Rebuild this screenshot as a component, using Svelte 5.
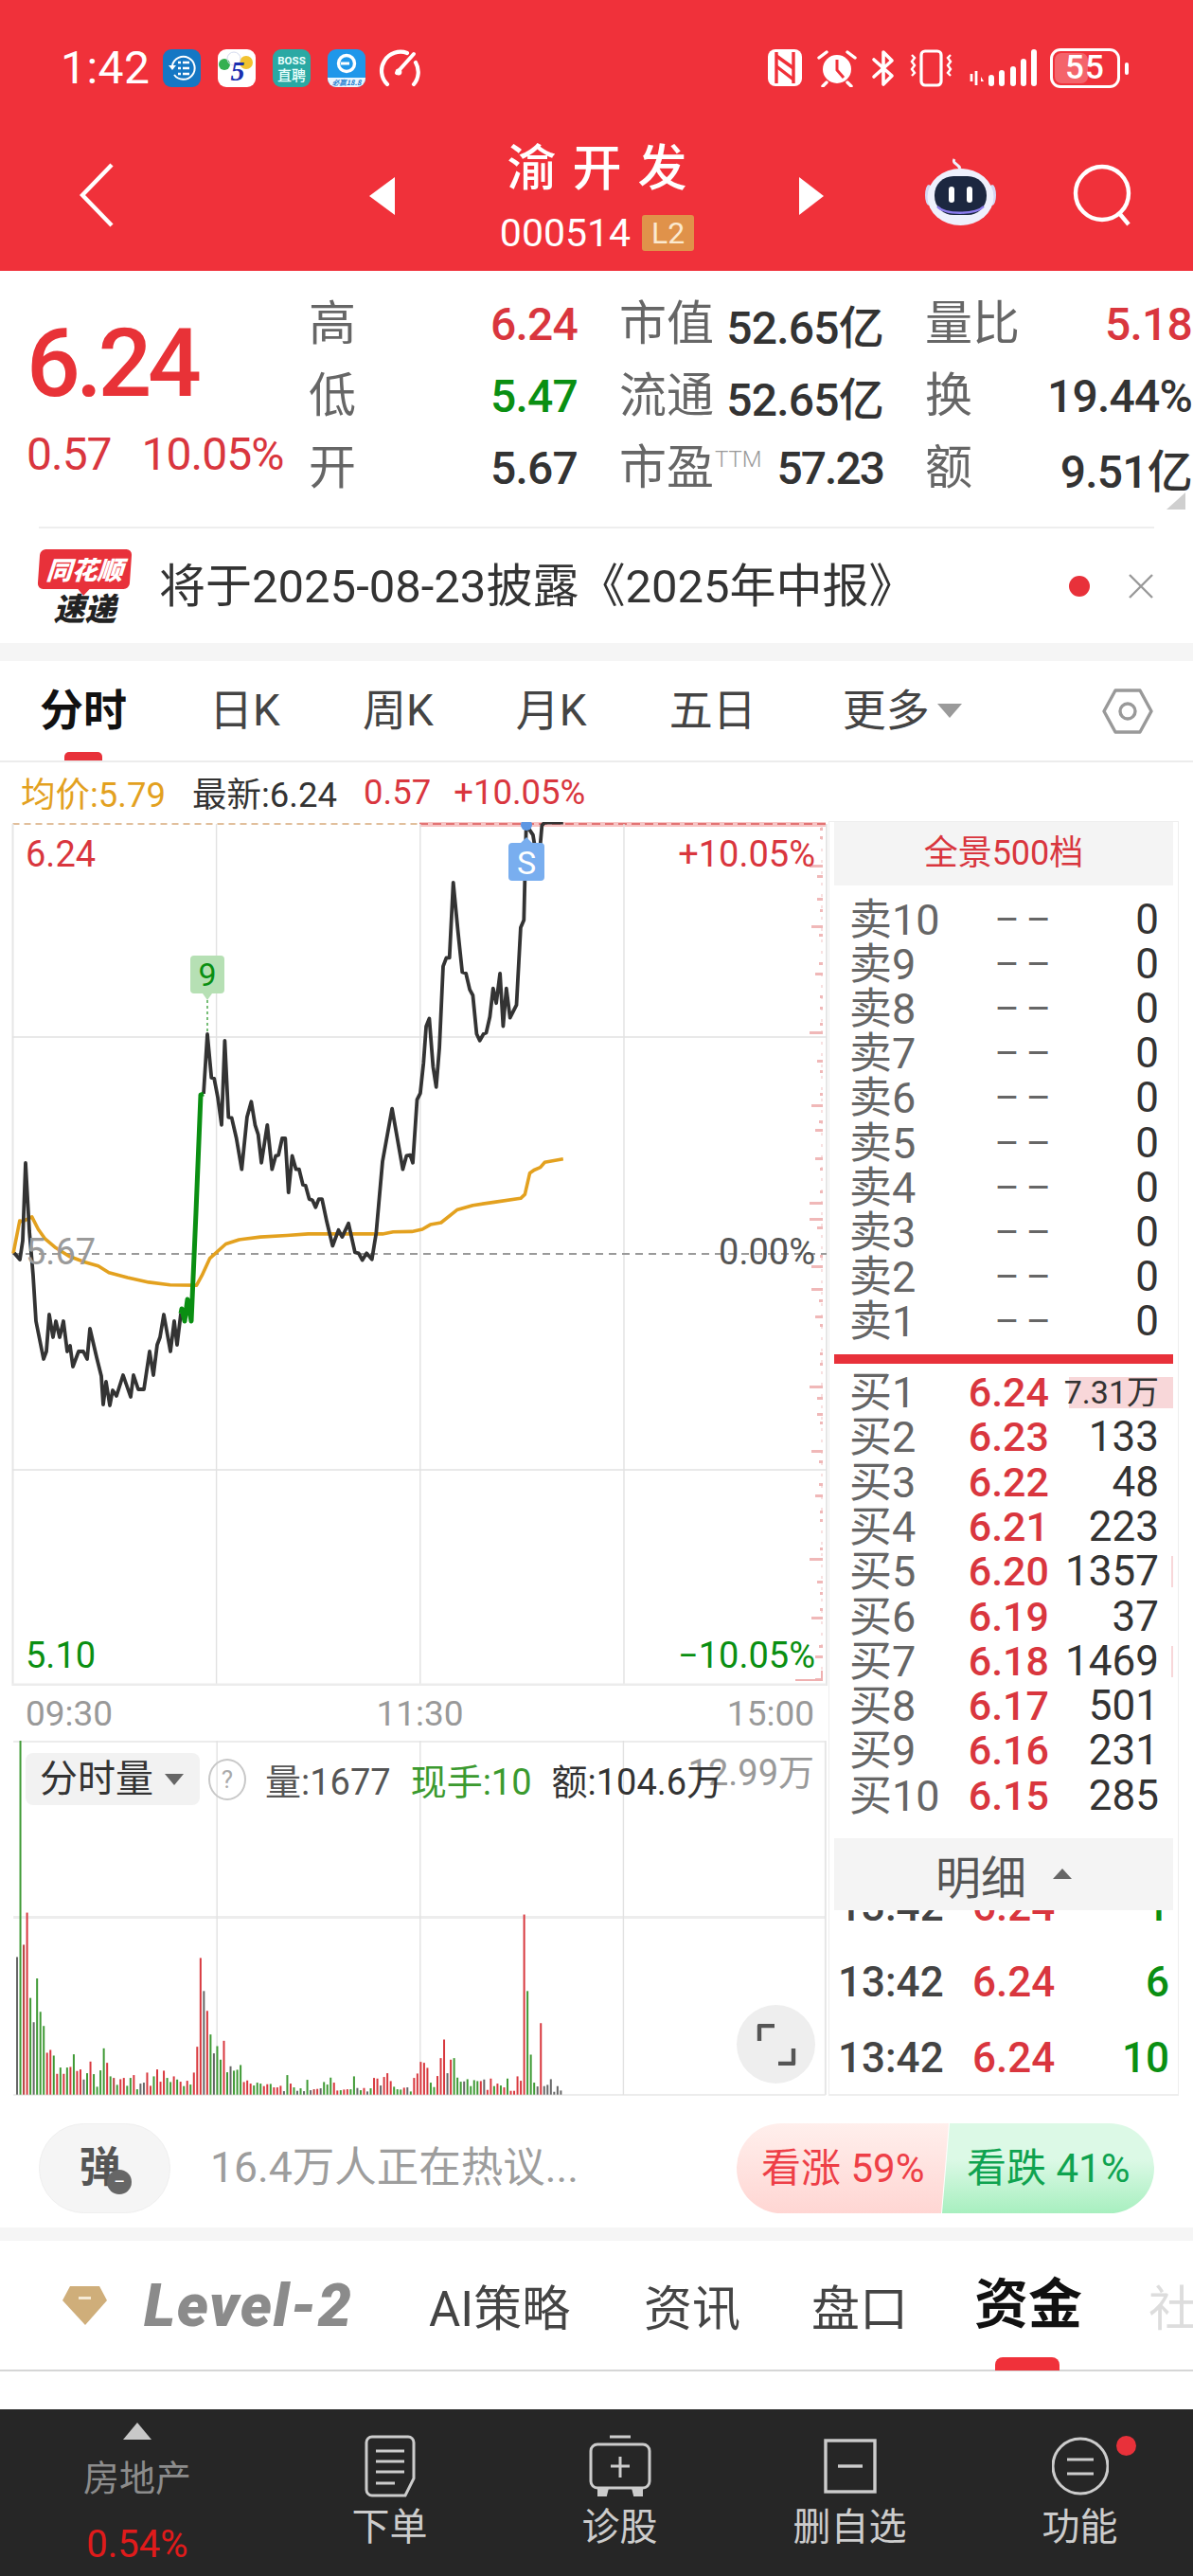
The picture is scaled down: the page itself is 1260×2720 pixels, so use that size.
<script>
  const Z = (p) => p.map(([x, y]) => [+(x / 1.782).toFixed(1), +(800 + y / 2.45).toFixed(1)]);
  const pts = (a) => a.map((p) => p.join(',')).join(' ');

  const low = [[15,1323],[21,1330],[24,1310],[27,1228],[31,1300],[33,1323],[35,1347],[38,1395],[46,1435],[49,1427],[52,1388],[56,1412],[59,1395],[63,1412],[67,1395],[71,1427],[74,1421],[77,1443],[83,1427],[88,1427],[92,1435],[95,1403],[102,1433],[107,1453],[109,1483],[112,1459],[116,1484],[119,1468],[123,1474],[130,1452],[138,1475],[141,1452],[146,1467],[152,1467],[158,1427],[162,1452],[166,1420],[169,1412],[173,1388],[180,1427],[184,1395],[187,1420],[191,1387]];
  const greenLine = [[191,1387],[192,1382],[195,1395],[198,1372],[202,1395],[207,1280],[212,1156],[215,1155]];
  const high = [[215,1155],[219,1092]].concat(Z([[398,828],[403,830],[410,880],[417,950],[423,732],[430,930],[436,932],[445,985],[455,1065],[465,930],[473,890],[480,950],[486,975],[492,1048],[503,950],[512,1065],[519,1030],[524,1028],[531,985],[537,985],[543,1125],[550,1030],[557,1065],[563,1065],[570,1105],[575,1107],[582,1142],[588,1145],[594,1163],[600,1142],[606,1142],[615,1200],[626,1263],[637,1222],[644,1240],[656,1205],[668,1280],[675,1282],[682,1300],[690,1282],[700,1298],[708,1230],[720,1045],[738,908],[758,1065],[765,1030],[772,1028],[777,1048],[785,885],[791,868],[797,790],[802,695],[808,675],[815,800],[821,852],[827,750],[834,540],[840,518],[846,518],[853,323],[862,450],[870,555],[877,558],[884,600],[890,615],[897,715],[903,732],[910,715],[915,712],[922,670],[928,597],[934,635],[941,558],[947,695],[953,597],[960,673],[972,640],[980,440],[986,420],[990,190],[991,175],[1003,200],[1013,285],[1020,175],[1025,168],[1060,168]]));
  const avg = Z([[25,1283],[37,1198],[42,1200],[60,1188],[72,1220],[85,1245],[105,1268],[130,1290],[160,1305],[185,1315],[205,1332],[240,1345],[280,1357],[320,1364],[370,1365],[380,1340],[395,1295],[425,1258],[450,1247],[490,1240],[540,1236],[580,1232],[720,1232],[740,1227],[775,1226],[795,1220],[810,1208],[830,1203],[860,1170],[890,1158],[930,1150],[980,1140],[988,1130],[997,1075],[1005,1067],[1017,1060],[1025,1047],[1040,1043],[1060,1038]]);

  const volRaw = 'k201 g-486 R162 r60 g331 k408 g269 g375 g420 r505 r496 g514 r572 g552 r572 g552 r550 g510 r563 r558 k590 g570 r533 g573 g613 g561 g491 r537 g580 R585 g607 r589 r585 g610 g585 r576 g621 k603 k600 r568 r610 g580 r558 r597 r562 g585 g598 r580 g590 r597 g611 r594 g606 r568 r486 r204 k309 r372 g447 k507 g484 g527 r467 g567 k548 g562 g559 g544 r598 r593 r603 g609 g600 g603 r611 r605 g604 r615 r615 r610 k627 g576 r603 g615 k626 g618 k627 g591 k624 R621 r620 k618 g598 g606 g584 r600 r625 g624 r622 r621 g621 g580 k617 g624 r617 k628 g618 r585 r587 k609 r582 r570 r595 g613 g621 g622 r616 k615 g628 r585 r571 r534 r537 r553 g600 g614 r579 r522 r463 k570 r527 g522 g584 g597 k596 g589 g611 g592 g595 r595 k590 r623 r587 g611 r603 g609 r615 g587 r626 r626 r580 r594 r66 g309 g511 g600 k612 r411 k611 k607 k589 k629 k611 k625';
  const colors = { k: '#666666', g: '#3f9a35', r: '#d8383e', R: '#b8403e' };
  const bars = volRaw.split(' ').map((s, i) => {
    const h = (638 - +s.slice(1)) / 3;
    return { x: +(15.9 + i * 3.533).toFixed(2), h, c: colors[s[0]] };
  });

  let ticks = [];
  for (let i = 0, y = 874; y < 1775; i++) {
    const w = [3, 8, 4, 12, 3, 6, 14, 3][(i * 7 + (i >> 2)) % 8];
    ticks.push({ y, w });
    y += [9, 17, 12, 24, 11, 30][(i * 5) % 6];
  }

  const sells = [10, 9, 8, 7, 6, 5, 4, 3, 2, 1];
  const buys = [
    ['买1', '6.24', '7.31万'], ['买2', '6.23', '133'], ['买3', '6.22', '48'], ['买4', '6.21', '223'],
    ['买5', '6.20', '1357'], ['买6', '6.19', '37'], ['买7', '6.18', '1469'], ['买8', '6.17', '501'],
    ['买9', '6.16', '231'], ['买10', '6.15', '285']
  ];
  const tradeRows = ['1', '6', '10'];
  const chartV = [228.6, 443.8, 659];
</script>

<div class="page">
  <header class="head">
    <div class="status">
      <span class="time">1:42</span>
      <svg class="ni" viewBox="0 0 40 40"><rect width="40" height="40" rx="9" fill="#1577c4"/><path d="M10 17a12 12 0 1 1 2 10" fill="none" stroke="#fff" stroke-width="2"/><path d="M6 17h8l-4 5z" fill="#fff"/><path d="M16 14h3m2 0h7M16 20h3m2 0h7M16 26h3m2 0h7" stroke="#fff" stroke-width="2.4"/></svg>
      <svg class="ni" viewBox="0 0 40 40"><rect width="40" height="40" rx="9" fill="#fff"/><circle cx="30" cy="14" r="7" fill="#f2c230"/><circle cx="7" cy="16" r="6" fill="#35b050"/><circle cx="17" cy="10" r="7" fill="none" stroke="#d6dcef"/><text x="21" y="33" class="five">5</text></svg>
      <svg class="ni" viewBox="0 0 40 40"><rect width="40" height="40" rx="9" fill="#2aa9a4"/><text x="20" y="16" class="boss">BOSS</text><text x="20" y="33" class="zp">直聘</text></svg>
      <svg class="ni" viewBox="0 0 40 40"><rect width="40" height="40" rx="9" fill="#1f97ea"/><path d="M0 30h40v1a9 9 0 0 1-9 9H9a9 9 0 0 1-9-9z" fill="#eaf6ff"/><circle cx="20" cy="15" r="8.5" fill="none" stroke="#fff" stroke-width="3.4"/><path d="M14 15h9" stroke="#fff" stroke-width="3"/><text x="20" y="38" class="bi">必赢18.8</text></svg>
      <svg class="gauge" viewBox="0 0 46 40"><path d="M9 37A20 20 0 0 1 30 4M39 14a20 20 0 0 1-2 23" fill="none" stroke="#fff" stroke-width="4.2" stroke-linecap="round"/><path d="M19 25L37 5" stroke="#fff" stroke-width="4" stroke-linecap="round"/><circle cx="21" cy="24" r="3.4" fill="#fff"/></svg>
      <span class="spacer"></span>
      <svg class="s1" viewBox="0 0 36 39"><rect width="36" height="39" rx="8" fill="#fff"/><path d="M9 3v33M27 3v33" stroke="#f03038" stroke-width="3.4"/><path d="M9 7l18 13M9 18l18 14" stroke="#f03038" stroke-width="3.4"/></svg>
      <svg class="s2" viewBox="0 0 42 40"><circle cx="21" cy="21" r="15" fill="#fff"/><path d="M21 11v11l7 8" fill="none" stroke="#f03038" stroke-width="3"/><path d="M2 9l8-6M40 9l-8-6M10 35l-4 4M32 35l4 4" stroke="#fff" stroke-width="3.4" stroke-linecap="round"/></svg>
      <svg class="s3" viewBox="0 0 25 40"><path d="M3 11l19 17-9 9V3l9 9L3 29" fill="none" stroke="#fff" stroke-width="3.6" stroke-linejoin="round" stroke-linecap="round"/></svg>
      <svg class="s4" viewBox="0 0 47 40"><rect x="13" y="2" width="21" height="36" rx="4" fill="none" stroke="#fff" stroke-width="3.2"/><path d="M3 6l3 3-3 4 3 4-3 4 3 4-3 3M44 6l-3 3 3 4-3 4 3 4-3 4 3 3" fill="none" stroke="#fff" stroke-width="2.4"/></svg>
      <svg class="s5" viewBox="0 0 72 40"><path d="M3 34v-8M8 38V23" stroke="#fff" stroke-width="2.8"/><path d="M13 29l3 5h-3z" fill="#fff"/><g stroke="#fff" stroke-width="6" stroke-linecap="round"><path d="M24 36v-6M35 36v-11M47 36V21M58 36V13"/><path d="M69 36V3"/></g></svg>
      <div class="batt"><div class="battfill"></div><span>55</span></div>
      <div class="nub"></div>
    </div>
    <div class="nav">
      <svg class="back" viewBox="0 0 36 68"><path d="M34 2L3 34l31 32" fill="none" stroke="#fff" stroke-width="4.4"/></svg>
      <div class="tri-l"></div>
      <div class="center">
        <div class="title">渝开发</div>
        <div class="code"><span>000514</span><b>L2</b></div>
      </div>
      <div class="tri-r"></div>
      <svg class="robot" viewBox="0 0 77 72">
        <path d="M38 12C36 6 29 7 32 2" fill="none" stroke="#eef0fb" stroke-width="3"/>
        <ellipse cx="5" cy="40" rx="4" ry="11" fill="#d4d6f2"/><ellipse cx="72" cy="40" rx="4" ry="11" fill="#d4d6f2"/>
        <ellipse cx="38.5" cy="42" rx="35" ry="30" fill="#eef0fc"/>
        <rect x="11" y="20" width="55" height="41" rx="20" fill="#1c2740"/>
        <path d="M14 52c8 9 40 9 49 0" fill="none" stroke="#8d7df0" stroke-width="2.4"/>
        <rect x="26" y="31" width="6" height="17" rx="3" fill="#fff"/><rect x="45" y="31" width="6" height="17" rx="3" fill="#fff"/>
      </svg>
      <svg class="search" viewBox="0 0 66 66"><circle cx="31" cy="31" r="28" fill="none" stroke="#fff" stroke-width="4.4"/><path d="M49 52l10 12" stroke="#fff" stroke-width="4.4"/></svg>
    </div>
  </header>

  <section class="quote">
    <div class="pricebox">
      <div class="big">6.24</div>
      <div class="chg"><span>0.57</span><span>10.05%</span></div>
    </div>
    <div class="stats">
      <div class="cell"><em>高</em><b class="up">6.24</b></div>
      <div class="cell"><em>市值</em><b>52.65亿</b></div>
      <div class="cell"><em>量比</em><b class="up">5.18</b></div>
      <div class="cell"><em>低</em><b class="dn">5.47</b></div>
      <div class="cell"><em>流通</em><b>52.65亿</b></div>
      <div class="cell"><em>换</em><b>19.44%</b></div>
      <div class="cell"><em>开</em><b>5.67</b></div>
      <div class="cell"><em>市盈<sup>TTM</sup></em><b class="nar">57.23</b></div>
      <div class="cell"><em>额</em><b>9.51亿</b></div>
    </div>
    <div class="corner"></div>
  </section>

  <section class="news">
    <div class="logo"><div class="lred">同花顺</div><div class="lblk">速递</div></div>
    <div class="newstext">将于2025-08-23披露《2025年中报》</div>
    <span class="rdot"></span>
    <svg class="xx" viewBox="0 0 26 26"><path d="M1 1l24 24M25 1L1 25" stroke="#999" stroke-width="2.4"/></svg>
  </section>
  <div class="band"></div>

  <nav class="tabs">
    <span class="tab active">分时</span>
    <span class="tab">日K</span>
    <span class="tab">周K</span>
    <span class="tab">月K</span>
    <span class="tab">五日</span>
    <span class="tab more">更多<i></i></span>
    <svg class="hex" viewBox="0 0 54 50"><path d="M14 3h26l12 22-12 22H14L2 25z" fill="none" stroke="#999" stroke-width="3.4" stroke-linejoin="round"/><circle cx="27" cy="25" r="8" fill="none" stroke="#999" stroke-width="3.4"/></svg>
  </nav>

  <div class="info">
    <span class="yel">均价:5.79</span>
    <span class="dk">最新:6.24</span>
    <span class="rd">0.57</span>
    <span class="rd pct">+10.05%</span>
  </div>

  <div class="mainrow">
    <div class="left">
      <div class="chart">
        <svg class="fill" viewBox="0 868 878 912">
          <rect x="443" y="868" width="429" height="5" fill="#f6c4c4"/>
          <line x1="13.5" x2="443" y1="870" y2="870" stroke="#d7ab7c" stroke-width="1.6" stroke-dasharray="7 5"/>
          <line x1="443" x2="872" y1="870" y2="870" stroke="#dd5a5a" stroke-width="1.6" stroke-dasharray="9 5"/>
          <line x1="13.5" x2="13.5" y1="870" y2="1780" stroke="#e6e6e6" stroke-width="2"/>
          <line x1="873" x2="873" y1="870" y2="1780" stroke="#e6e6e6" stroke-width="2"/>
          {#each chartV as x}<line x1={x} x2={x} y1="870" y2="1780" stroke="#e2e2e2" stroke-width="1.4"/>{/each}
          <line x1="13" x2="873" y1="1095" y2="1095" stroke="#e2e2e2" stroke-width="1.4"/>
          <line x1="13" x2="873" y1="1552" y2="1552" stroke="#e2e2e2" stroke-width="1.4"/>
          <line x1="13" x2="873" y1="1779" y2="1779" stroke="#ececec" stroke-width="3"/>
          <line x1="868" x2="868" y1="872" y2="1778" stroke="#f6d4d4" stroke-width="1.4" stroke-dasharray="3 9"/>
          {#each ticks as t}<rect x={869 - t.w} y={t.y} width={t.w} height="3" fill="#f0b8b8"/>{/each}
          <path d="M840 1774h28v-10" fill="none" stroke="#efb0b0" stroke-width="2"/>
          <line x1="13" x2="873" y1="1324" y2="1324" stroke="#9a9a9a" stroke-width="1.8" stroke-dasharray="8 6"/>
          <polyline points={pts(avg)} fill="none" stroke="#e3a11f" stroke-width="3.6" stroke-linejoin="round"/>
          <polyline points={pts(low)} fill="none" stroke="#333" stroke-width="3.8" stroke-linejoin="round"/>
          <polyline points={pts(high)} fill="none" stroke="#333" stroke-width="3.8" stroke-linejoin="round"/>
          <polyline points={pts(greenLine)} fill="none" stroke="#0a8f12" stroke-width="5" stroke-linejoin="round"/>
          <line x1="219" x2="219" y1="1056" y2="1092" stroke="#3fa33f" stroke-width="1.4" stroke-dasharray="3 3"/>
          <path d="M205 1009h28a4 4 0 0 1 4 4v32a4 4 0 0 1-4 4h-9l-5 7-5-7h-9a4 4 0 0 1-4-4v-32a4 4 0 0 1 4-4z" fill="#b6e0b4"/>
          <path d="M541 890h9l6-6 6 6h9a4 4 0 0 1 4 4v32a4 4 0 0 1-4 4h-30a4 4 0 0 1-4-4v-32a4 4 0 0 1 4-4z" fill="#79aeef"/>
          <circle cx="556" cy="871" r="6" fill="#5e97e3"/>
        </svg>
        <span class="lab lt rd" style="top:14px">6.24</span>
        <span class="lab rt rd" style="top:14px">+10.05%</span>
        <span class="lab lt g9" style="top:434px">5.67</span>
        <span class="lab rt g5" style="top:434px">0.00%</span>
        <span class="lab lt gn" style="top:860px">5.10</span>
        <span class="lab rt gn" style="top:860px">−10.05%</span>
        <span class="mark9">9</span>
        <span class="markS">S</span>
      </div>
      <div class="times"><span>09:30</span><span>11:30</span><span>15:00</span></div>
      <div class="vol">
        <svg class="fill" viewBox="0 1838 878 376">
          <line x1="13" x2="873" y1="1838.5" y2="1838.5" stroke="#ececec" stroke-width="3"/>
          <line x1="13" x2="873" y1="2025" y2="2025" stroke="#ededed" stroke-width="3"/>
          <line x1="13" x2="873" y1="2213" y2="2213" stroke="#ececec" stroke-width="2"/>
          {#each chartV as x}<line x1={x} x2={x} y1="1838" y2="2213" stroke="#e2e2e2" stroke-width="1.4"/>{/each}
          <line x1="873" x2="873" y1="1838" y2="2213" stroke="#e6e6e6" stroke-width="2"/>
          {#each bars as b}<rect x={b.x} y={2212.7 - b.h} width="2" height={b.h} fill={b.c}/>{/each}
        </svg>
        <span class="vmax">12.99万</span>
        <div class="volhead">
          <div class="chip">分时量<i></i></div>
          <span class="q">?</span>
          <span class="g5">量:1677</span>
          <span class="grn">现手:10</span>
          <span class="dk">额:104.6万</span>
        </div>
        <div class="full"><svg viewBox="0 0 44 44"><path d="M20 2H4v16M24 42h16V26" fill="none" stroke="#555" stroke-width="4.4" stroke-linejoin="round"/></svg></div>
      </div>
    </div>

    <aside class="panel">
      <div class="pband rd5">全景500档</div>
      <div class="book sell">
        {#each sells as n}
          <div class="row"><span class="l">卖{n}</span><span class="p dash">––</span><span class="v">0</span></div>
        {/each}
      </div>
      <div class="redbar"></div>
      <div class="book buy">
        {#each buys as b, i}
          <div class="row" class:hl={i === 0} class:sl={i === 4 || i === 6}><span class="l">{b[0]}</span><span class="p rp">{b[1]}</span><span class="v" class:sm={i === 0}>{b[2]}</span></div>
        {/each}
      </div>
      <div class="mx">明细<i></i></div>
      <div class="trades">
        {#each tradeRows as q}
          <div class="tr"><span class="tt">13:42</span><span class="tp">6.24</span><span class="tq">{q}</span></div>
        {/each}
      </div>
    </aside>
  </div>

  <section class="talk">
    <div class="dan"><span>弹</span><i>−</i></div>
    <div class="hot">16.4万人正在热议...</div>
    <div class="senti">
      <div class="bull">看涨 59%</div>
      <div class="bear">看跌 41%</div>
    </div>
  </section>
  <div class="band2"></div>

  <nav class="lower">
    <svg class="gem" viewBox="0 0 47 42"><path d="M8 1h31l8 15-23 26L0 16z" fill="#cfae7a"/><rect x="17" y="12" width="13" height="3" fill="#f5ead6"/></svg>
    <span class="lvl">Level-2</span>
    <span class="lt1">AI策略</span>
    <span class="lt2">资讯</span>
    <span class="lt3">盘口</span>
    <span class="lt4">资金</span>
    <span class="lt5">社</span>
  </nav>
  <div class="gap"></div>

  <footer class="bar">
    <div class="fi sector">
      <div class="uptri"></div>
      <div class="sn">房地产</div>
      <div class="sp">0.54%</div>
    </div>
    <div class="fi">
      <svg class="fic" style="width:56px" viewBox="0 0 56 66"><path d="M9 2h38a6 6 0 0 1 6 6v38l-9 18H9a6 6 0 0 1-6-6V8a6 6 0 0 1 6-6z" fill="none" stroke="#ccc" stroke-width="3"/><path d="M13 17h30M13 28h30M13 39h30M13 51h20" stroke="#ccc" stroke-width="3"/></svg>
      <span>下单</span>
    </div>
    <div class="fi">
      <svg class="fic" style="width:66px" viewBox="0 0 66 66"><path d="M22 2h22" stroke="#ccc" stroke-width="3"/><rect x="2" y="10" width="62" height="46" rx="7" fill="none" stroke="#ccc" stroke-width="3"/><path d="M33 23v22M23 33h20" stroke="#ccc" stroke-width="3"/><path d="M10 56v8h8l2-8M46 56l2 8h8v-8" fill="#ccc" stroke="#ccc" stroke-width="2"/></svg>
      <span>诊股</span>
    </div>
    <div class="fi">
      <svg class="fic" style="width:56px" viewBox="0 0 56 66"><rect x="2" y="6" width="52" height="54" fill="none" stroke="#ccc" stroke-width="3.4"/><path d="M15 33h26" stroke="#ccc" stroke-width="3.4"/></svg>
      <span>删自选</span>
    </div>
    <div class="fi">
      <svg class="fic" style="width:60px" viewBox="0 0 60 66"><ellipse cx="30" cy="33" rx="29" ry="29" fill="none" stroke="#ccc" stroke-width="3"/><path d="M16 26h28M16 41h28" stroke="#ccc" stroke-width="3"/></svg>
      <span>功能</span>
      <i class="fdot"></i>
    </div>
  </footer>
</div>

<style>
  :global(body) { margin: 0; background: #fff; }
  .page { width: 1260px; height: 2720px; overflow: hidden; display: flex; flex-direction: column; font-family: Roboto, "Noto Sans CJK SC", sans-serif; color: #333; background: #fff; }
  i, em { font-style: normal; }

  .head { background: #f0313a; height: 286px; flex: none; color: #fff; }
  .status { height: 144px; display: flex; align-items: flex-start; padding: 52px 0 0 64px; box-sizing: border-box; }
  .time { font-size: 48px; line-height: 40px; width: 108px; font-weight: 400; letter-spacing: .5px; }
  .ni { width: 40px; height: 40px; margin-right: 18px; flex: none; }
  .five { font: italic 900 30px "Liberation Serif", serif; fill: #1a2fb0; text-anchor: middle; }
  .boss { font: 700 11.5px Roboto, sans-serif; fill: #eafffd; text-anchor: middle; }
  .zp { font: 500 15px "Noto Sans CJK SC", sans-serif; fill: #eafffd; text-anchor: middle; }
  .bi { font: italic 700 7.5px "Noto Sans CJK SC", sans-serif; fill: #1f7fd0; text-anchor: middle; }
  .gauge { width: 46px; height: 40px; margin-left: -4px; flex: none; }
  .spacer { flex: 1; }
  .s1 { width: 36px; height: 39px; flex: none; margin-left: 0; }
  .s2 { width: 42px; height: 40px; margin-left: 16px; flex: none; }
  .s3 { width: 25px; height: 40px; margin-left: 15px; flex: none; }
  .s4 { width: 47px; height: 40px; margin-left: 15px; flex: none; }
  .s5 { width: 72px; height: 40px; margin-left: 16px; flex: none; }
  .batt { position: relative; width: 74px; height: 42px; box-sizing: border-box; border: 3px solid #fff; border-radius: 11px; margin: -1px 0 0 14px; flex: none; overflow: hidden; text-align: center; font-size: 35px; line-height: 36px; font-weight: 500; }
  .battfill { position: absolute; left: 2px; top: 2px; bottom: 2px; width: 52%; background: rgba(255,255,255,.25); border-radius: 7px; }
  .batt span { position: relative; letter-spacing: 1px; }
  .nub { width: 4px; height: 13px; background: #fff; border-radius: 2px; margin: 14px 68px 0 5px; flex: none; }

  .nav { height: 142px; display: flex; align-items: flex-start; padding-left: 84px; }
  .back { width: 36px; height: 68px; margin: 28px 270px 0 0; flex: none; }
  .tri-l, .tri-r { width: 0; height: 0; border-style: solid; flex: none; margin-top: 43px; }
  .tri-l { border-width: 20px 27px 20px 0; border-color: transparent #fff transparent transparent; }
  .tri-r { border-width: 20px 0 20px 26px; border-color: transparent transparent transparent #fff; }
  .center { width: 427px; flex: none; display: flex; flex-direction: column; align-items: center; padding-top: 6px; }
  .title { font-size: 52px; line-height: 58px; letter-spacing: 17px; padding-left: 17px; font-weight: 500; }
  .code { display: flex; align-items: center; gap: 12px; font-size: 41px; line-height: 44px; margin-top: 16px; }
  .code b { background: #e0924a; color: #fbe9cf; width: 55px; height: 38px; border-radius: 3px; font-weight: 400; font-size: 32px; line-height: 38px; text-align: center; }
  .robot { width: 77px; height: 72px; margin: 22px 0 0 106px; flex: none; }
  .search { width: 66px; height: 66px; margin: 29px 0 0 80px; flex: none; }

  .quote { position: relative; height: 270px; flex: none; display: flex; }
  .pricebox { width: 326px; flex: none; padding-left: 28px; box-sizing: border-box; }
  .big { font-size: 100px; font-weight: 500; color: #e83237; line-height: 100px; margin-top: 48px; letter-spacing: -4.5px; }
  .chg { display: flex; gap: 32px; font-size: 48px; line-height: 50px; margin-top: 21px; color: #d9363e; letter-spacing: -1px; }
  .stats { display: grid; grid-template-columns: 284px 279px 282px; column-gap: 44px; grid-auto-rows: 76px; padding-top: 18px; }
  .cell { display: flex; justify-content: space-between; align-items: center; }
  .cell em { font-size: 50px; color: #666; line-height: 76px; }
  .cell sup { font-size: 24px; color: #999; vertical-align: 18px; line-height: 0; font-weight: 300; margin-left: 1px; }
  .cell b { font-weight: 500; font-size: 48px; color: #333; letter-spacing: -.8px; }
  .cell b.nar { letter-spacing: -2px; }
  .cell b.up { color: #d9363e; }
  .cell b.dn { color: #0a8f12; }
  .corner { position: absolute; right: 8px; top: 234px; width: 0; height: 0; border-style: solid; border-width: 0 0 18px 20px; border-color: transparent transparent #cfcfcf transparent; }

  .news { margin: 0 41px; border-top: 2px solid #eee; height: 121px; flex: none; display: flex; align-items: center; position: relative; }
  .logo { width: 97px; flex: none; display: flex; flex-direction: column; align-items: center; }
  .lred { position: relative; width: 97px; height: 42px; background: #e8313a; border-radius: 6px; color: #fff; font: italic 800 27px/42px "Noto Sans CJK SC", sans-serif; text-align: center; transform: skewX(-4deg); }
  .lred::after { content: ""; position: absolute; left: 42px; bottom: -7px; border-style: solid; border-width: 8px 7px 0 7px; border-color: #e8313a transparent transparent transparent; }
  .lblk { font: italic 800 33px/34px "Noto Sans CJK SC", sans-serif; color: #222; margin-top: 2px; }
  .newstext { font-size: 49px; margin: -8px 0 0 30px; color: #333; white-space: nowrap; flex: 1; }
  .rdot { width: 22px; height: 22px; border-radius: 50%; background: #e8313a; flex: none; margin-right: 41px; }
  .xx { width: 26px; height: 26px; flex: none; margin-right: 1px; }
  .band { height: 19px; flex: none; background: #f5f5f5; }

  .tabs { height: 105px; flex: none; box-sizing: content-box; display: flex; align-items: center; gap: 87px; padding: 0 42px; border-bottom: 2px solid #ececec; }
  .tab { position: relative; font-size: 46px; color: #444; line-height: 105px; white-space: nowrap; }
  .tab.active { color: #111; font-weight: 700; }
  .tab.active::after { content: ""; position: absolute; left: 26px; right: 26px; bottom: 0; height: 9px; border-radius: 5px 5px 0 0; background: #e8313a; }
  .more { display: flex; align-items: center; margin-left: 4px; }
  .more i { width: 0; height: 0; margin-left: 8px; border-style: solid; border-width: 15px 13px 0 13px; border-color: #9a9a9a transparent transparent transparent; }
  .hex { width: 54px; height: 50px; margin-left: auto; flex: none; }

  .info { height: 63px; flex: none; display: flex; align-items: center; padding-left: 22px; gap: 28px; font-size: 36.5px; white-space: nowrap; }
  .info .pct { margin-left: -4px; }
  .yel { color: #e3a11f; } .dk { color: #333; } .rd { color: #d9363e; } .g9 { color: #9a9a9a; } .g5 { color: #555; } .gn { color: #0a8f12; } .grn { color: #3b9a2f; }

  .mainrow { height: 1345px; flex: none; display: flex; }
  .left { width: 875px; flex: none; display: flex; flex-direction: column; }
  .chart { position: relative; height: 912px; flex: none; }
  .fill { position: absolute; left: 0; top: 0; width: 878px; height: 100%; display: block; }
  .lab { position: absolute; font-size: 38px; line-height: 40px; white-space: nowrap; }
  .lab.lt { left: 27px; }
  .lab.rt { right: 14px; }
  .mark9, .markS { position: absolute; font-size: 30px; line-height: 40px; text-align: center; }
  .mark9 { left: 201px; top: 141px; width: 36px; color: #0a8f12; font-size: 34px; }
  .markS { left: 537px; top: 23px; width: 38px; color: #fff; font-size: 34px; }
  .times { height: 58px; flex: none; display: flex; justify-content: space-between; align-items: center; padding: 0 15px 0 27px; font-size: 37px; color: #999; }
  .vol { position: relative; height: 375px; flex: none; }
  .volhead { position: absolute; left: 27px; top: 13px; display: flex; align-items: center; font-size: 38px; white-space: nowrap; }
  .chip { width: 184px; height: 55px; box-sizing: border-box; padding-left: 15px; background: #f2f2f2; border-radius: 8px; font-size: 40px; line-height: 55px; display: flex; align-items: center; color: #333; }
  .chip i { margin-left: 12px; width: 0; height: 0; border-style: solid; border-width: 12px 10px 0 10px; border-color: #666 transparent transparent transparent; }
  .q { width: 36px; height: 40px; margin: 0 20px 0 9px; border: 2px solid #c8c8c8; border-radius: 50%; color: #aaa; font-size: 26px; line-height: 40px; text-align: center; flex: none; }
  .volhead .grn { margin: 0 21px; }
  .vmax { position: absolute; right: 15px; top: 14px; font-size: 38px; line-height: 40px; color: #999; }
  .full { position: absolute; left: 778px; top: 279px; width: 83px; height: 83px; border-radius: 50%; background: #eee; display: flex; align-items: center; justify-content: center; }
  .full svg { width: 44px; height: 44px; }

  .panel { width: 370px; flex: none; height: 1346px; margin-top: -1px; box-sizing: border-box; border: 1.5px solid #eee; border-bottom-width: 2px; padding: 0 5px; overflow: hidden; }
  .pband { height: 67px; background: #f4f4f4; text-align: center; font-size: 36px; line-height: 67px; color: #d9363e; }
  .book { display: flex; flex-direction: column; }
  .sell { margin-top: 13px; }
  .row { position: relative; display: grid; grid-template-columns: 1fr 100px 116px; padding: 0 15px 0 16px; height: 47.1px; line-height: 47px; font-size: 45px; align-items: center; }
  .l { color: #666; white-space: nowrap; letter-spacing: 0; }
  .p { text-align: right; }
  .dash { color: #666; font-size: 40px; letter-spacing: 7px; margin-right: -9px; }
  .v { text-align: right; color: #333; font-size: 44px; position: relative; }
  .rp { color: #d9363e; font-weight: 500; font-size: 43px; }
  .v.sm { font-size: 34px; white-space: nowrap; }
  .hl::before { content: ""; position: absolute; left: 248px; right: 0; top: 7px; height: 33px; background: #f8d7d9; }
  .sl::before { content: ""; position: absolute; right: 0; width: 2px; top: 7px; height: 33px; background: #f8d7d9; }
  .row > span { position: relative; }
  .redbar { height: 10px; background: #e8313a; margin-top: 11px; }
  .buy { margin-top: 7px; }
  .buy .row { height: 47.3px; }
  .mx { margin-top: 21px; height: 76px; position: relative; z-index: 1; background: #f4f4f4; display: flex; align-items: center; justify-content: center; gap: 28px; font-size: 48px; color: #555; }
  .mx i { width: 0; height: 0; border-style: solid; border-width: 0 10px 11px 10px; border-color: transparent transparent #666 transparent; }
  .trades { height: 196px; overflow: hidden; }
  .tr { display: grid; grid-template-columns: 142px 92px 1fr; height: 80px; line-height: 80px; font-size: 44px; padding: 0 4px 0 4px; align-items: center; }
  .tr:first-child { margin-top: -44px; }
  .tt { color: #444; font-weight: 500; }
  .tp { color: #d9363e; font-weight: 500; }
  .tq { color: #0a8f12; text-align: right; font-weight: 500; }

  .talk { height: 139px; flex: none; display: flex; align-items: flex-start; padding: 29px 41px 0; box-sizing: border-box; }
  .dan { position: relative; width: 139px; height: 95px; box-sizing: border-box; border: 1px solid #efefef; border-radius: 48px; background: #f5f5f5; flex: none; text-align: center; font-size: 44px; font-weight: 700; line-height: 93px; color: #555; }
  .dan span { position: relative; left: -5px; }
  .dan i { position: absolute; left: 71px; top: 48px; width: 26px; height: 26px; border-radius: 50%; background: #666; color: #fff; font-size: 22px; line-height: 26px; font-weight: 400; }
  .hot { margin-left: 42px; font-size: 44.5px; line-height: 95px; color: #9d9d9d; white-space: nowrap; flex: 1; }
  .senti { display: flex; width: 441px; height: 95px; flex: none; font-size: 42px; line-height: 95px; }
  .bull, .bear { width: 224px; flex: none; box-sizing: border-box; white-space: nowrap; }
  .bull { background: linear-gradient(#ffefec, #ffd6d3); color: #ee3f47; border-radius: 48px 0 0 48px; clip-path: polygon(0 0, 100% 0, calc(100% - 8px) 100%, 0 100%); padding-left: 26px; margin-right: -7px; }
  .bear { background: linear-gradient(#dcf9e6 40%, #a7efbf); color: #0fa350; border-radius: 0 48px 48px 0; clip-path: polygon(8px 0, 100% 0, 100% 100%, 0 100%); padding-left: 26px; }
  .band2 { height: 14px; flex: none; background: #f5f5f5; }

  .lower { position: relative; height: 138px; flex: none; box-sizing: border-box; border-bottom: 2px solid #d6d6d6; display: flex; align-items: center; font-size: 51px; color: #444; white-space: nowrap; padding-left: 66px; }
  .gem { width: 47px; height: 42px; flex: none; margin-right: 39px; }
  .lvl { font-style: italic; font-weight: 900; font-size: 63px; color: #8b8b8b; width: 223px; flex: none; letter-spacing: 1.5px; }
  .lt1 { margin-left: 78px; width: 150px; flex: none; }
  .lt2 { margin-left: 77px; width: 100px; flex: none; }
  .lt3 { margin-left: 77px; width: 98px; flex: none; }
  .lt4 { margin-left: 74px; width: 114px; flex: none; font-size: 57px; font-weight: 700; color: #111; position: relative; height: 138px; line-height: 138px; }
  .lt4::after { content: ""; position: absolute; left: 22px; width: 68px; bottom: 0; height: 14px; background: #f0313a; border-radius: 8px 8px 0 0; }
  .lt5 { margin-left: 70px; color: #ddd; }
  .gap { height: 40px; flex: none; }

  .bar { flex: 1; background: #262626; display: grid; grid-template-columns: 290px repeat(4, 243px); }
  .fi { position: relative; display: flex; flex-direction: column; align-items: center; color: #ccc; font-size: 40px; line-height: 44px; }
  .fic { height: 66px; margin-top: 27px; flex: none; }
  .fi > span { margin-top: 10px; }
  .uptri { width: 0; height: 0; margin-top: 14px; border-style: solid; border-width: 0 15px 18px 15px; border-color: transparent transparent #c8c8c8 transparent; }
  .sn { margin-top: 19px; color: #8c8c8c; font-size: 38px; }
  .sp { margin-top: 26px; color: #e01b1b; font-size: 40px; }
  .fdot { position: absolute; left: 160px; top: 28px; width: 21px; height: 21px; border-radius: 50%; background: #e8313a; }
</style>
